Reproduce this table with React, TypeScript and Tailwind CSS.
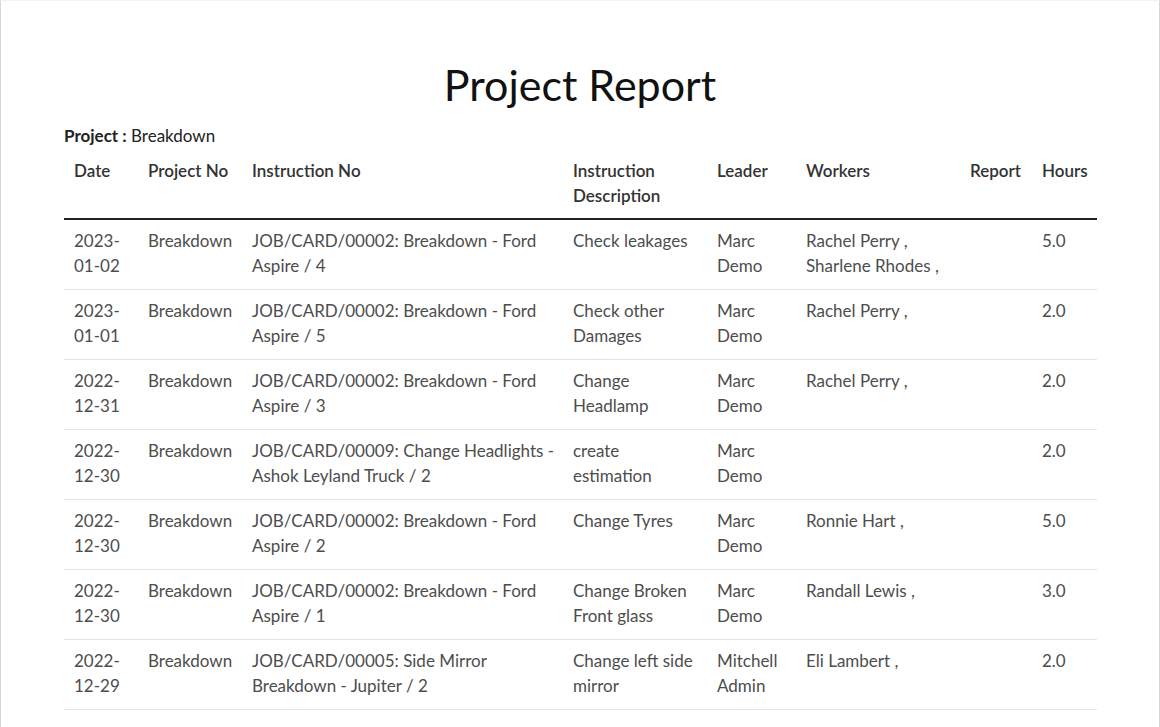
const rows = [
  { date: ["2023-", "01-02"], project: "Breakdown", instruction: "JOB/CARD/00002: Breakdown - Ford Aspire / 4", desc: "Check leakages", leader: "Marc Demo", workers: ["Rachel Perry ,", "Sharlene Rhodes ,"], hours: "5.0" },
  { date: ["2023-", "01-01"], project: "Breakdown", instruction: "JOB/CARD/00002: Breakdown - Ford Aspire / 5", desc: "Check other Damages", leader: "Marc Demo", workers: ["Rachel Perry ,"], hours: "2.0" },
  { date: ["2022-", "12-31"], project: "Breakdown", instruction: "JOB/CARD/00002: Breakdown - Ford Aspire / 3", desc: "Change Headlamp", leader: "Marc Demo", workers: ["Rachel Perry ,"], hours: "2.0" },
  { date: ["2022-", "12-30"], project: "Breakdown", instruction: "JOB/CARD/00009: Change Headlights - Ashok Leyland Truck / 2", desc: "create estimation", leader: "Marc Demo", workers: [], hours: "2.0" },
  { date: ["2022-", "12-30"], project: "Breakdown", instruction: "JOB/CARD/00002: Breakdown - Ford Aspire / 2", desc: "Change Tyres", leader: "Marc Demo", workers: ["Ronnie Hart ,"], hours: "5.0" },
  { date: ["2022-", "12-30"], project: "Breakdown", instruction: "JOB/CARD/00002: Breakdown - Ford Aspire / 1", desc: "Change Broken Front glass", leader: "Marc Demo", workers: ["Randall Lewis ,"], hours: "3.0" },
  { date: ["2022-", "12-29"], project: "Breakdown", instruction: "JOB/CARD/00005: Side Mirror Breakdown - Jupiter / 2", desc: "Change left side mirror", leader: "Mitchell Admin", workers: ["Eli Lambert ,"], hours: "2.0" },
]

const headers = ["Date", "Project No", "Instruction No", "Instruction Description", "Leader", "Workers", "Report", "Hours"]

export default function App() {
  return (
    <div className="min-h-screen bg-white font-['Lato',sans-serif]">
      <div className="min-h-[727px] border-x border-[#d6d6d6] border-t border-t-[#f3f3f3] px-[63px] pt-[58px]">
        <h2 className="text-center text-[43px] leading-[52px] text-[#111]">Project Report</h2>
        <div className="mt-[15px] text-[17px] leading-[20px] text-[#222]">
          <span className="font-bold">Project :</span> Breakdown
        </div>
        <table className="w-full table-fixed border-collapse text-[17px] leading-[25px]">
          <colgroup>
            <col className="w-[74px]" />
            <col className="w-[104px]" />
            <col className="w-[321px]" />
            <col className="w-[144px]" />
            <col className="w-[89px]" />
            <col className="w-[164px]" />
            <col className="w-[72px]" />
            <col className="w-[65px]" />
          </colgroup>
          <thead>
            <tr className="border-b-2 border-[#222]">
              {headers.map((h) => (
                <th key={h} className="pl-[10px] pr-[6px] pt-[12px] pb-[10px] text-left align-top font-semibold text-[#333]">
                  {h}
                </th>
              ))}
            </tr>
          </thead>
          <tbody className="text-[#4d4d4d]">
            {rows.map((r, i) => (
              <tr key={i} className="border-b border-[#e3e3e3]">
                <td className="pl-[10px] pr-[6px] pt-[8px] pb-[11px] align-top">
                  {r.date[0]}
                  <br />
                  {r.date[1]}
                </td>
                <td className="pl-[10px] pr-[6px] pt-[8px] pb-[11px] align-top">{r.project}</td>
                <td className="pl-[10px] pr-[6px] pt-[8px] pb-[11px] align-top">{r.instruction}</td>
                <td className="pl-[10px] pr-[6px] pt-[8px] pb-[11px] align-top">{r.desc}</td>
                <td className="pl-[10px] pr-[6px] pt-[8px] pb-[11px] align-top">{r.leader}</td>
                <td className="pl-[10px] pr-[6px] pt-[8px] pb-[11px] align-top">
                  {r.workers.map((w) => (
                    <div key={w}>{w}</div>
                  ))}
                </td>
                <td className="pl-[10px] pr-[6px] pt-[8px] pb-[11px] align-top"></td>
                <td className="pl-[10px] pr-[6px] pt-[8px] pb-[11px] align-top">{r.hours}</td>
              </tr>
            ))}
          </tbody>
        </table>
      </div>
    </div>
  )
}
